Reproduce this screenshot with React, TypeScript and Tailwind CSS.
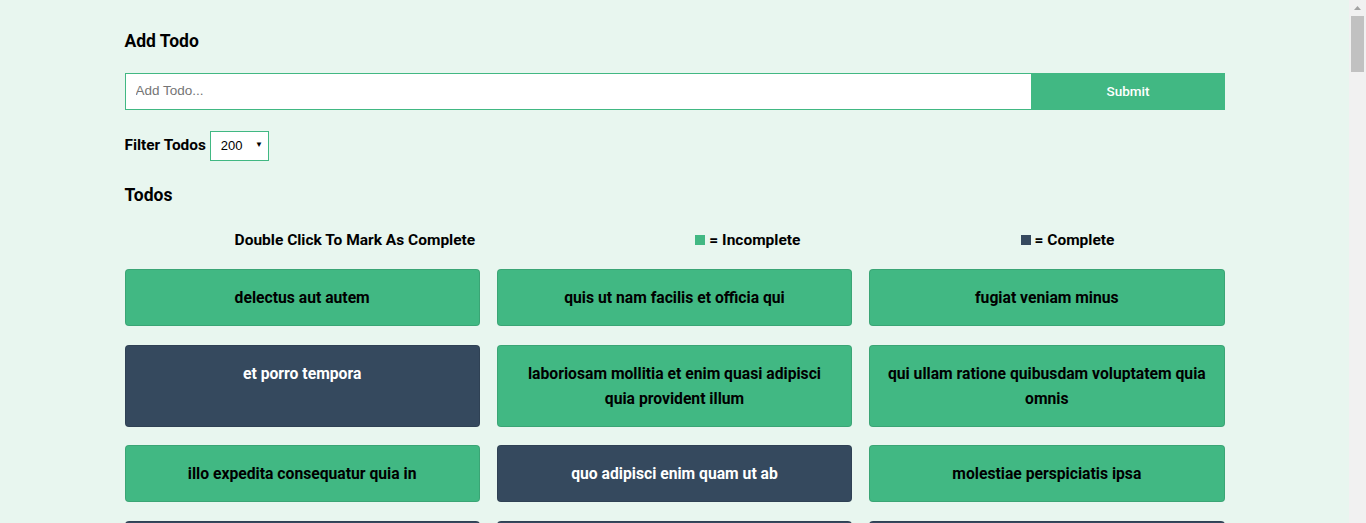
import React, { useState } from 'react';

type Todo = { id: number; title: string; completed: boolean };

const initialTodos: Todo[] = [
  { id: 1, title: 'delectus aut autem', completed: false },
  { id: 2, title: 'quis ut nam facilis et officia qui', completed: false },
  { id: 3, title: 'fugiat veniam minus', completed: false },
  { id: 4, title: 'et porro tempora', completed: true },
  { id: 5, title: 'laboriosam mollitia et enim quasi adipisci quia provident illum', completed: false },
  { id: 6, title: 'qui ullam ratione quibusdam voluptatem quia omnis', completed: false },
  { id: 7, title: 'illo expedita consequatur quia in', completed: false },
  { id: 8, title: 'quo adipisci enim quam ut ab', completed: true },
  { id: 9, title: 'molestiae perspiciatis ipsa', completed: false },
  { id: 10, title: 'illo est ratione doloremque quia maiores aut', completed: true },
  { id: 11, title: 'vero rerum temporibus dolor', completed: true },
  { id: 12, title: 'ipsa repellendus fugit nisi', completed: true },
  { id: 13, title: 'et doloremque nulla', completed: false },
  { id: 14, title: 'repellendus sunt dolores architecto voluptatum', completed: true },
  { id: 15, title: 'ab voluptatum amet voluptas', completed: true },
];

const App: React.FC = () => {
  const [todos, setTodos] = useState<Todo[]>(initialTodos);
  const [text, setText] = useState('');
  const [limit, setLimit] = useState('200');

  const toggle = (id: number) => {
    setTodos(todos.map(t => (t.id === id ? { ...t, completed: !t.completed } : t)));
  };

  const onSubmit = (e: React.FormEvent) => {
    e.preventDefault();
    if (!text.trim()) return;
    setTodos([{ id: Date.now(), title: text, completed: false }, ...todos]);
    setText('');
  };

  return (
    <div className="h-screen flex overflow-hidden bg-[#e8f6ef] text-black font-['Roboto',_'Liberation_Sans',_sans-serif]">
      <main className="flex-1 overflow-hidden">
        <div className="max-w-[1100px] mx-auto pt-[30px] pb-10">
          <h3 className="text-[17.5px] leading-[22px] font-bold">Add Todo</h3>

          <form onSubmit={onSubmit} className="flex mt-[21px] h-[37px]">
            <input
              type="text"
              value={text}
              onChange={e => setText(e.target.value)}
              placeholder="Add Todo..."
              className="flex-1 bg-white border border-[#41b883] px-[10px] text-[13.5px] font-['Liberation_Sans',_sans-serif] placeholder:text-[#757575] outline-none"
            />
            <button type="submit" className="w-[193px] bg-[#41b883] text-white text-[13.5px] font-medium">
              Submit
            </button>
          </form>

          <div className="flex items-center mt-[21px]">
            <span className="text-[15.4px] font-bold mr-[4px]">Filter Todos</span>
            <div className="relative">
              <select
                value={limit}
                onChange={e => setLimit(e.target.value)}
                className="appearance-none w-[59px] h-[30px] bg-white border border-[#41b883] pl-[10px] text-[13px] font-['Liberation_Sans',_sans-serif] outline-none"
              >
                <option value="5">5</option>
                <option value="10">10</option>
                <option value="15">15</option>
                <option value="20">20</option>
                <option value="200">200</option>
              </select>
              <span className="pointer-events-none absolute right-[6px] top-[10px] text-[8px] leading-none">▼</span>
            </div>
          </div>

          <h3 className="text-[17.5px] leading-[22px] font-bold mt-[23px]">Todos</h3>

          <div className="flex justify-around mt-[24px] text-[15.5px] leading-[20px] font-bold">
            <span>Double Click To Mark As Complete</span>
            <span className="flex items-center">
              <span className="inline-block w-[10px] h-[10px] bg-[#41b883] mr-[4px]" />= Incomplete
            </span>
            <span className="flex items-center">
              <span className="inline-block w-[10px] h-[10px] bg-[#35495e] mr-[4px]" />= Complete
            </span>
          </div>

          <div className="grid grid-cols-3 gap-x-[17px] gap-y-[18.5px] mt-[19px]">
            {todos.slice(0, Number(limit)).map(todo => (
              <div
                key={todo.id}
                onDoubleClick={() => toggle(todo.id)}
                className={`rounded-[4px] border border-black/10 px-4 py-[15px] text-center text-[15.7px] leading-[25px] font-bold select-none cursor-pointer ${
                  todo.completed ? 'bg-[#35495e] text-white' : 'bg-[#41b883] text-black'
                }`}
              >
                {todo.title}
              </div>
            ))}
          </div>
        </div>
      </main>

      {/* page scrollbar as it looks in the reference */}
      <div className="w-[17px] shrink-0 bg-[#f1f1f1] flex flex-col items-center">
        <div className="h-[16px] flex items-center justify-center">
          <svg width="7" height="4" viewBox="0 0 7 4">
            <path d="M0 4 L3.5 0 L7 4 Z" fill="#a3a3a3" />
          </svg>
        </div>
        <div className="w-[13px] h-[56px] bg-[#c1c1c1]" />
      </div>
    </div>
  );
};

export default App;
